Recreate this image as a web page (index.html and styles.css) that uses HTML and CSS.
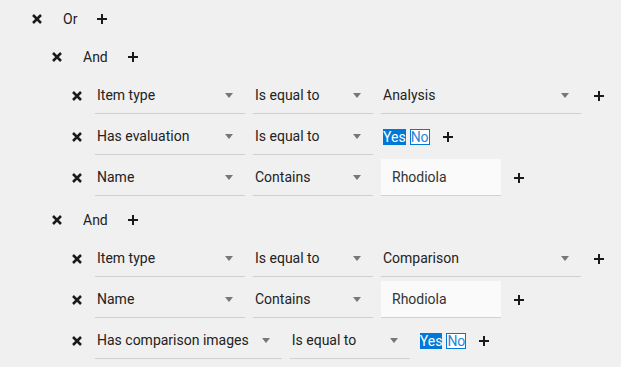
FILE: index.html
```html
<!DOCTYPE html>
<html lang="en">
<head>
    <meta charset="UTF-8">
    <meta name="viewport" content="width=device-width, initial-scale=1.0">
    <title>Query builder</title>
    <link rel="stylesheet" href="styles.css">
</head>
<body>
    <div class="builder">
        <div class="group">
            <div class="group-head">
                <svg class="remove" viewBox="0 0 10 10"><path d="M1 1L9 9M9 1L1 9"/></svg>
                <span class="op">Or</span>
                <svg class="add" viewBox="0 0 10 10"><path d="M5 0V10M0 5H10"/></svg>
            </div>
            <div class="group-body">

                <div class="group">
                    <div class="group-head">
                        <svg class="remove" viewBox="0 0 10 10"><path d="M1 1L9 9M9 1L1 9"/></svg>
                        <span class="op">And</span>
                        <svg class="add" viewBox="0 0 10 10"><path d="M5 0V10M0 5H10"/></svg>
                    </div>
                    <div class="conditions">
                        <div class="cond">
                            <svg class="remove" viewBox="0 0 10 10"><path d="M1 1L9 9M9 1L1 9"/></svg>
                            <div class="select field"><span>Item type</span><svg class="caret" viewBox="0 0 8 5"><polygon points="0,0 8,0 4,5"/></svg></div>
                            <div class="select operator"><span>Is equal to</span><svg class="caret" viewBox="0 0 8 5"><polygon points="0,0 8,0 4,5"/></svg></div>
                            <div class="select value"><span>Analysis</span><svg class="caret" viewBox="0 0 8 5"><polygon points="0,0 8,0 4,5"/></svg></div>
                            <svg class="add" viewBox="0 0 10 10"><path d="M5 0V10M0 5H10"/></svg>
                        </div>
                        <div class="cond">
                            <svg class="remove" viewBox="0 0 10 10"><path d="M1 1L9 9M9 1L1 9"/></svg>
                            <div class="select field"><span>Has evaluation</span><svg class="caret" viewBox="0 0 8 5"><polygon points="0,0 8,0 4,5"/></svg></div>
                            <div class="select operator"><span>Is equal to</span><svg class="caret" viewBox="0 0 8 5"><polygon points="0,0 8,0 4,5"/></svg></div>
                            <div class="yesno"><span class="yes">Yes</span><span class="no">No</span></div>
                            <svg class="add after-bool" viewBox="0 0 10 10"><path d="M5 0V10M0 5H10"/></svg>
                        </div>
                        <div class="cond">
                            <svg class="remove" viewBox="0 0 10 10"><path d="M1 1L9 9M9 1L1 9"/></svg>
                            <div class="select field"><span>Name</span><svg class="caret" viewBox="0 0 8 5"><polygon points="0,0 8,0 4,5"/></svg></div>
                            <div class="select operator"><span>Contains</span><svg class="caret" viewBox="0 0 8 5"><polygon points="0,0 8,0 4,5"/></svg></div>
                            <div class="text-input">Rhodiola</div>
                            <svg class="add" viewBox="0 0 10 10"><path d="M5 0V10M0 5H10"/></svg>
                        </div>
                    </div>
                </div>

                <div class="group">
                    <div class="group-head">
                        <svg class="remove" viewBox="0 0 10 10"><path d="M1 1L9 9M9 1L1 9"/></svg>
                        <span class="op">And</span>
                        <svg class="add" viewBox="0 0 10 10"><path d="M5 0V10M0 5H10"/></svg>
                    </div>
                    <div class="conditions">
                        <div class="cond">
                            <svg class="remove" viewBox="0 0 10 10"><path d="M1 1L9 9M9 1L1 9"/></svg>
                            <div class="select field"><span>Item type</span><svg class="caret" viewBox="0 0 8 5"><polygon points="0,0 8,0 4,5"/></svg></div>
                            <div class="select operator"><span>Is equal to</span><svg class="caret" viewBox="0 0 8 5"><polygon points="0,0 8,0 4,5"/></svg></div>
                            <div class="select value"><span>Comparison</span><svg class="caret" viewBox="0 0 8 5"><polygon points="0,0 8,0 4,5"/></svg></div>
                            <svg class="add" viewBox="0 0 10 10"><path d="M5 0V10M0 5H10"/></svg>
                        </div>
                        <div class="cond">
                            <svg class="remove" viewBox="0 0 10 10"><path d="M1 1L9 9M9 1L1 9"/></svg>
                            <div class="select field"><span>Name</span><svg class="caret" viewBox="0 0 8 5"><polygon points="0,0 8,0 4,5"/></svg></div>
                            <div class="select operator"><span>Contains</span><svg class="caret" viewBox="0 0 8 5"><polygon points="0,0 8,0 4,5"/></svg></div>
                            <div class="text-input">Rhodiola</div>
                            <svg class="add" viewBox="0 0 10 10"><path d="M5 0V10M0 5H10"/></svg>
                        </div>
                        <div class="cond">
                            <svg class="remove" viewBox="0 0 10 10"><path d="M1 1L9 9M9 1L1 9"/></svg>
                            <div class="select field"><span>Has comparison images</span><svg class="caret" viewBox="0 0 8 5"><polygon points="0,0 8,0 4,5"/></svg></div>
                            <div class="select operator"><span>Is equal to</span><svg class="caret" viewBox="0 0 8 5"><polygon points="0,0 8,0 4,5"/></svg></div>
                            <div class="yesno"><span class="yes">Yes</span><span class="no">No</span></div>
                            <svg class="add after-bool" viewBox="0 0 10 10"><path d="M5 0V10M0 5H10"/></svg>
                        </div>
                    </div>
                </div>

            </div>
        </div>
    </div>
</body>
</html>
```

FILE: styles.css
```css
body {
    background-color: #f0f0f0;
    color: #222222;
    font-family: Roboto, "Liberation Sans", sans-serif;
    font-size: 14px;
    margin: 0;
    padding: 0;
}
.builder {
    padding-left: 32px;
}
.group-head {
    display: flex;
    align-items: center;
    height: 38px;
}
.group-body {
    display: flex;
    flex-direction: column;
    gap: 5px;
    padding-left: 20px;
}
.conditions {
    display: flex;
    flex-direction: column;
    gap: 4px;
    padding-top: 1px;
    padding-left: 20px;
}
.cond {
    display: flex;
    align-items: center;
    height: 37px;
}
.op {
    margin-left: 21px;
}
.remove, .add {
    width: 10px;
    height: 10px;
    flex-shrink: 0;
}
.remove path {
    stroke: #1a1a1a;
    stroke-width: 2.5;
    fill: none;
}
.add path {
    stroke: #1a1a1a;
    stroke-width: 2;
    fill: none;
}
.group-head .add {
    margin-left: 20px;
}
.cond .add {
    margin-left: 13px;
}
.cond .add.after-bool {
    margin-left: 13px;
}
.select {
    display: flex;
    align-items: center;
    justify-content: space-between;
    gap: 13px;
    box-sizing: border-box;
    height: 37px;
    padding: 0 12px 0 2px;
    border-bottom: 1px solid #d0d0d0;
    margin-left: 8px;
    white-space: nowrap;
}
.select.field {
    min-width: 150px;
    margin-left: 13px;
}
.select.operator {
    width: 120px;
}
.select.value {
    width: 200px;
}
.caret {
    width: 8px;
    height: 5px;
    flex-shrink: 0;
}
.caret polygon {
    fill: #777777;
}
.text-input {
    display: flex;
    align-items: center;
    box-sizing: border-box;
    width: 120px;
    height: 37px;
    margin-left: 8px;
    padding-left: 11px;
    background-color: #fafafa;
    border-bottom: 1px solid #d0d0d0;
    color: #333333;
}
.yesno {
    display: flex;
    align-items: center;
    margin-left: 10px;
    line-height: 16px;
}
.yes {
    background-color: #0078d7;
    color: white;
}
.no {
    margin-left: 4px;
    box-sizing: border-box;
    height: 16px;
    border: 1px solid #0078d7;
    background-color: white;
    color: #2a86d6;
    line-height: 14px;
}
```
